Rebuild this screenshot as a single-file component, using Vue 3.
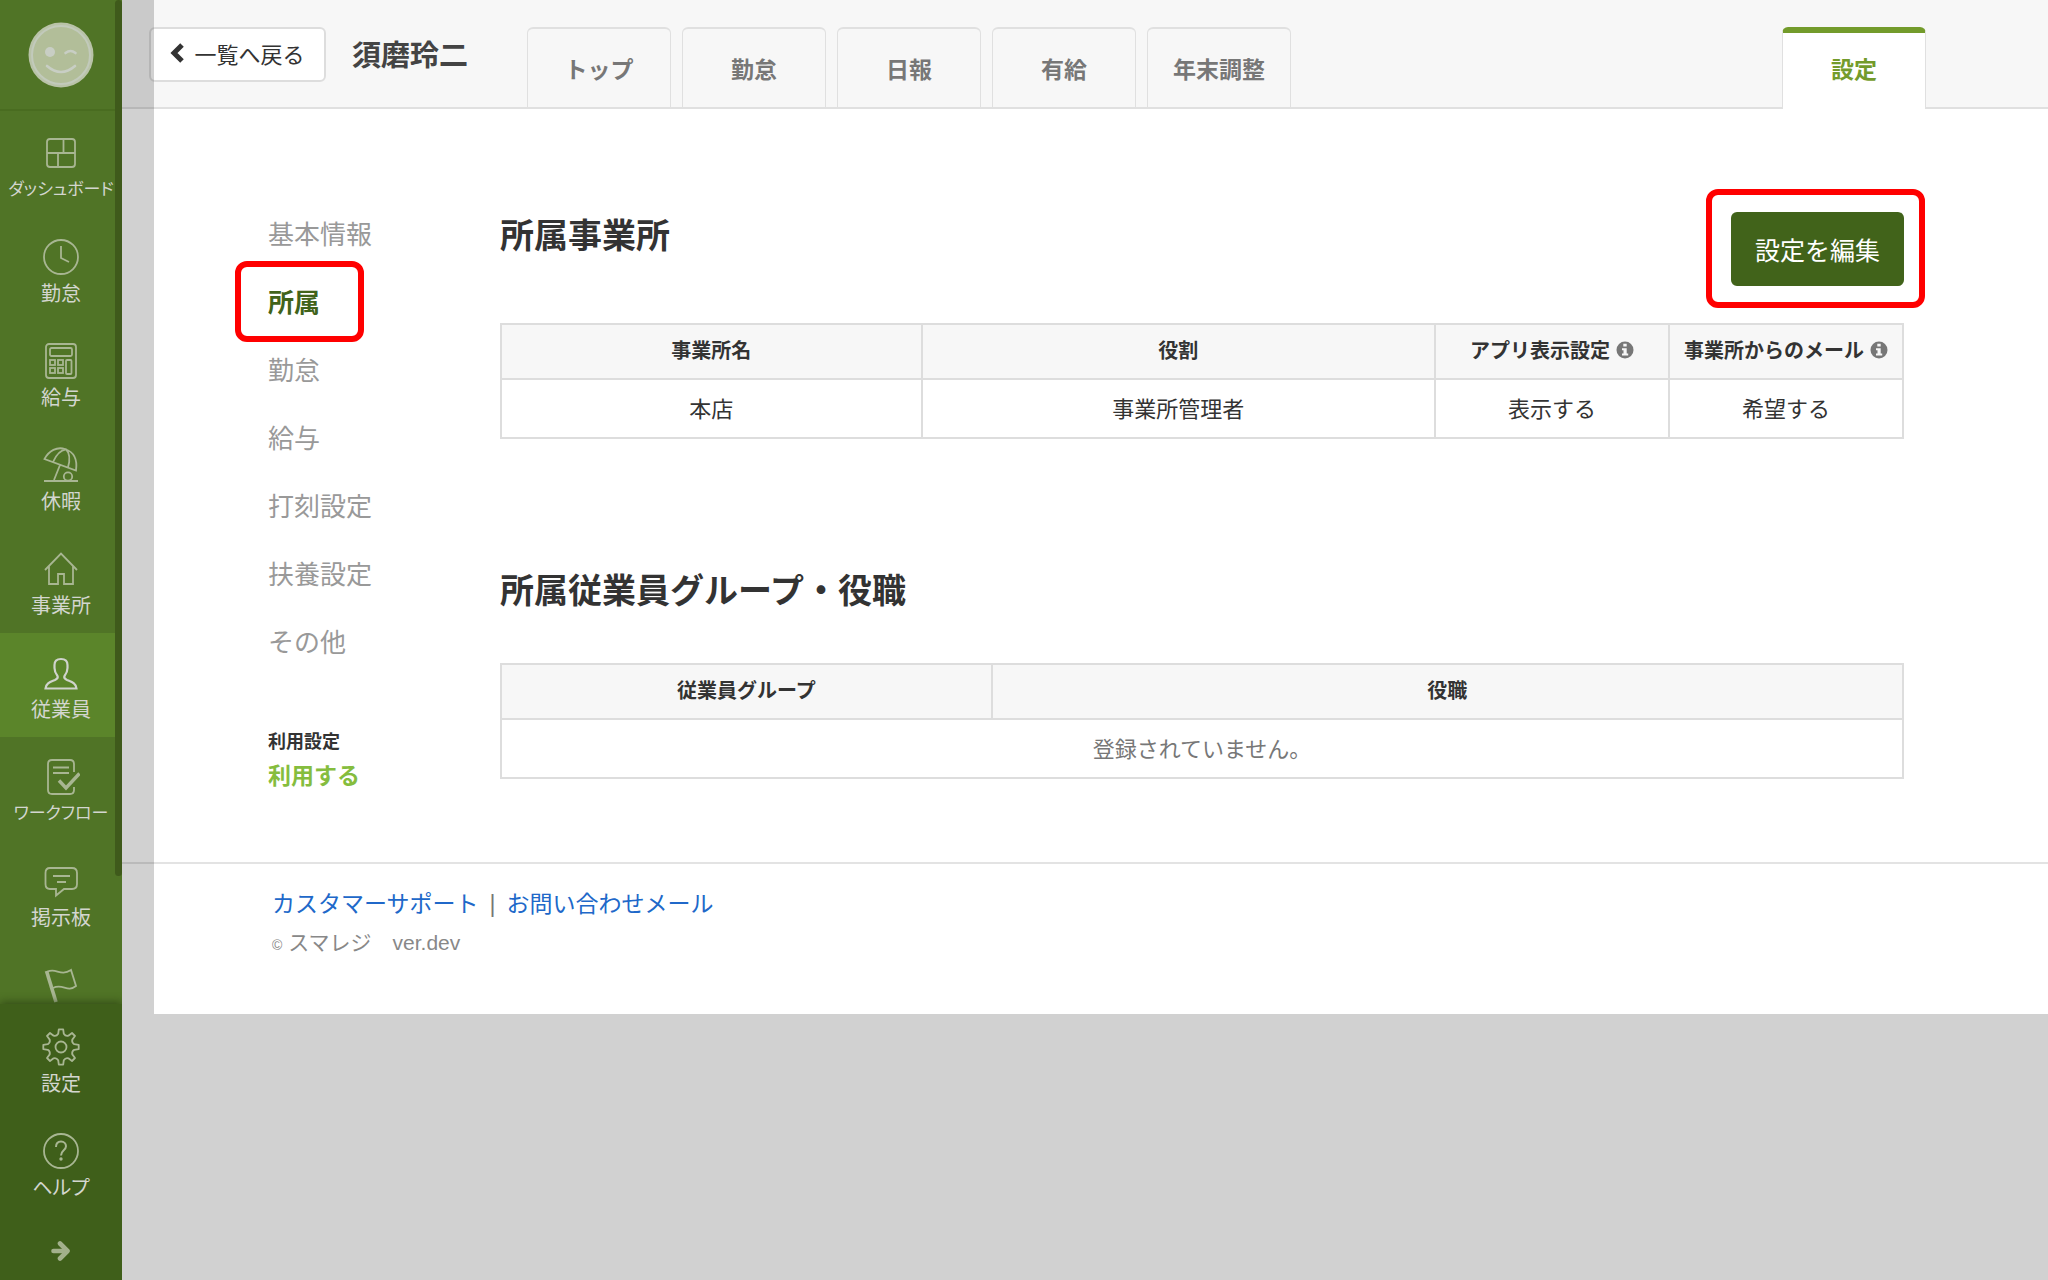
<script setup>
const navItems = [
  { label: 'ダッシュボード', icon: 'dashboard', long: true },
  { label: '勤怠', icon: 'clock' },
  { label: '給与', icon: 'calc' },
  { label: '休暇', icon: 'umbrella' },
  { label: '事業所', icon: 'home' },
  { label: '従業員', icon: 'person', active: true },
  { label: 'ワークフロー', icon: 'workflow', long: true },
  { label: '掲示板', icon: 'board' },
  { label: '', icon: 'flag' },
]
const footItems = [
  { label: '設定', icon: 'gear' },
  { label: 'ヘルプ', icon: 'help' },
]
const icons = {
  dashboard: '<rect x="5" y="5" width="28" height="28" rx="3"/><path d="M5 19h28M21.500 5v14M16 19v14"/>',
  clock: '<circle cx="19" cy="19" r="17"/><path d="M19 8v12l8 4"/>',
  calc: '<rect x="4" y="2" width="30" height="34" rx="3"/><rect x="8" y="6" width="22" height="8" rx="1.500"/><rect x="8" y="18" width="5" height="5"/><rect x="16" y="18" width="5" height="5"/><rect x="8" y="26" width="5" height="5"/><rect x="16" y="26" width="5" height="5"/><rect x="24" y="18" width="5.500" height="14" rx="1"/>',
  umbrella: '<path d="M2.500 13C7 4.500 15 .5 23 3c9 3 12.500 11 11 21.500ZM11 16C14 9 19 4 24 3.300c4 4 4 11 2 18M18 19l-6 15M2 35h34"/><circle cx="26" cy="30.500" r="4.200"/>',
  home: '<path d="M3 20 19 3.500 35 20M7 16.500V34h9V24h6v10h9V16.500"/>',
  person: '<path d="M19 5c-4.500 0-6.500 2.500-6.500 6v3c0 4 1 5.500 3 8 .8 1.600-.5 3-2.500 4-5 2-9 3-9.500 8.500h31C34 29 30 28 25 26c-2-1-3.300-2.400-2.500-4 2-2.500 3-4 3-8v-3c0-3.500-2-6-6.500-6Z"/>',
  workflow: '<path d="M32 14V6q0-4-4-4H10q-4 0-4 4v26q0 4 4 4h18q4 0 4-4v-3"/><path d="M11 9.500h16M11 15h16" stroke-width="2.200"/><path d="m17 22.500 7 7.500L37.500 15.500" stroke-width="3.400"/>',
  board: '<path d="M8 6h22q5 0 5 5v11q0 5-5 5H22l-8 6.500V27H8q-4.500 0-4.500-5V11q0-5 4.500-5Z"/><path d="M11 14h17M15 20h9" stroke-width="2"/>',
  flag: '<path d="M4.500 5 14 36" stroke-width="3.600"/><path d="M5 6c9-5 13 5 24-2l5 16c-9 7-13-3-23 2"/>',
  gear: '<circle cx="19" cy="19" r="5.500"/><path stroke-linejoin="round" d="M16.800 1.300h4.400l.6 4.500Q23.500 8.500 26.400 7.700L30 5l3 3-2.700 3.600Q29.500 14.500 32.200 16.200l4.500.6v4.400l-4.500.6Q29.500 23.500 30.300 26.400L33 30l-3 3-3.600-2.700Q23.500 29.500 21.800 32.200l-.6 4.500h-4.400l-.6-4.500Q14.500 29.500 11.600 30.300L8 33l-3-3 2.700-3.600Q8.500 23.500 5.800 21.800l-4.500-.6v-4.400l4.500-.6Q8.500 14.500 7.700 11.600L5 8l3-3 3.600 2.700Q14.500 8.500 16.200 5.800Z"/>',
  help: '<circle cx="19" cy="19" r="17"/><path d="M14 15c0-3.500 2-5.500 5-5.500s5 2 5 4.800c0 4-5 4.200-5 9.200" stroke-width="2"/><circle cx="19" cy="27" r=".8"/>',
}
const tabs = ['トップ', '勤怠', '日報', '有給', '年末調整']
const menu = ['基本情報', '所属', '勤怠', '給与', '打刻設定', '扶養設定', 'その他']
</script>

<template>
  <div class="app">
    <aside class="sidebar">
      <a class="avatar" href="#" aria-label="プロフィール">
        <svg viewBox="0 0 66 66" width="66" height="66">
          <circle cx="33" cy="33" r="32.500" fill="#b9c3a8" />
          <circle cx="33" cy="33" r="29" fill="#b2be99" stroke="#c2cabb" stroke-width="2" />
          <circle cx="22" cy="30" r="5" fill="#c8cec4" />
          <g fill="none" stroke="#c8cec4" stroke-width="2.600" stroke-linecap="round">
            <path d="M37.500 31q5-4 10 0M19 44q14 12 28 0" />
          </g>
        </svg>
      </a>
      <nav class="nav">
        <a v-for="n in navItems" :key="n.icon" href="#" class="nav-item" :class="{ active: n.active, long: n.long }">
          <svg class="ico" viewBox="0 0 38 38" v-html="icons[n.icon]" />
          <span v-if="n.label">{{ n.label }}</span>
        </a>
      </nav>
      <span class="scrollbar" />
      <div class="nav-foot">
        <a v-for="n in footItems" :key="n.icon" href="#" class="nav-item">
          <svg class="ico" viewBox="0 0 38 38" v-html="icons[n.icon]" />
          <span>{{ n.label }}</span>
        </a>
        <button class="expand" aria-label="メニューを開く">
          <svg viewBox="0 0 20 20" width="20" height="20" fill="none" stroke="#a3b18c" stroke-width="4.600" stroke-linecap="round" stroke-linejoin="round">
            <path d="M2.500 10h13" /><path d="m9 2.500 7.500 7.500L9 17.500" />
          </svg>
        </button>
      </div>
    </aside>

    <div class="page">
      <header class="header">
        <button class="back">
          <svg viewBox="0 0 14 20" width="14" height="20" fill="none" stroke="#333" stroke-width="5"><path d="M12 2 4 10l8 8" /></svg>
          一覧へ戻る
        </button>
        <h1>須磨玲二</h1>
        <nav class="tabs">
          <a v-for="t in tabs" :key="t" href="#" class="tab">{{ t }}</a>
          <a href="#" class="tab current">設定</a>
        </nav>
      </header>

      <div class="body">
        <div class="side">
          <ul class="menu">
            <li v-for="m in menu" :key="m">
              <a href="#" :class="{ current: m === '所属' }">{{ m }}</a>
              <span v-if="m === '所属'" class="frame menu-frame" />
            </li>
          </ul>
          <div class="usage">
            <div class="usage-label">利用設定</div>
            <div class="usage-value">利用する</div>
          </div>
        </div>

        <main class="content">
          <div class="section-head">
            <h2>所属事業所</h2>
            <div class="edit-wrap">
              <button class="edit">設定を編集</button>
              <span class="frame edit-frame" />
            </div>
          </div>
          <table class="offices">
            <colgroup><col class="c-name" /><col /><col class="c-opt" /><col class="c-opt" /></colgroup>
            <thead>
              <tr>
                <th>事業所名</th>
                <th>役割</th>
                <th v-for="h in ['アプリ表示設定', '事業所からのメール']" :key="h">
                  <span class="with-info">{{ h }}
                    <svg viewBox="0 0 18 18" width="18" height="18"><circle cx="9" cy="9" r="8.500" fill="#777" /><path d="M7.300 2.800h3.400v2.600H7.300zM6 7.200h4.700v5.200h1.500v2H6v-2h1.500V9.200H6z" fill="#f7f7f7" /></svg>
                  </span>
                </th>
              </tr>
            </thead>
            <tbody>
              <tr><td>本店</td><td>事業所管理者</td><td>表示する</td><td>希望する</td></tr>
            </tbody>
          </table>

          <h2 class="second">所属従業員グループ・役職</h2>
          <table>
            <colgroup><col class="c-group" /><col /></colgroup>
            <thead><tr><th>従業員グループ</th><th>役職</th></tr></thead>
            <tbody><tr><td colspan="2" class="empty">登録されていません。</td></tr></tbody>
          </table>
        </main>
      </div>

      <footer class="footer">
        <div class="links"><a href="#">カスタマーサポート</a><span class="sep">|</span><a href="#">お問い合わせメール</a></div>
        <div class="copy"><small>©</small> スマレジ　ver.dev</div>
      </footer>
      <span class="shade" />
    </div>
  </div>
</template>

<style>
body { background: #d1d1d1; }
</style>

<style scoped>
* { box-sizing: border-box; }
.app {
  display: flex;
  align-items: flex-start;
  font-family: "Liberation Sans", "Noto Sans CJK JP", sans-serif;
  color: #333;
}
a { text-decoration: none; color: inherit; }
button { font: inherit; cursor: pointer; }
h1, h2 { margin: 0; }

.sidebar {
  position: sticky;
  top: 0;
  flex: none;
  display: flex;
  flex-direction: column;
  width: 122px;
  height: 100vh;
  background: #507426;
}
.avatar {
  flex: none;
  display: flex;
  justify-content: center;
  height: 111px;
  padding-top: 22px;
  border-bottom: 2px solid #496c20;
}
.nav { flex: 1; min-height: 0; padding-top: 2px; overflow: hidden; }
.nav-item {
  display: flex;
  flex-direction: column;
  align-items: center;
  height: 104px;
  padding-top: 21px;
  font-size: 20px;
  line-height: 28px;
  color: #d3d6cf;
  white-space: nowrap;
  font-feature-settings: "palt";
}
.nav-item.active { background: #5b852a; }
.nav-item.long { font-size: 17px; }
.ico {
  width: 38px;
  height: 38px;
  margin-bottom: 4px;
  fill: none;
  stroke: #a8b692;
  stroke-width: 1.8;
}
.active .ico { stroke: #d0d3cc; stroke-width: 2.2; }
.scrollbar {
  position: absolute;
  top: 0;
  right: 0;
  width: 7px;
  height: 876px;
  border-radius: 4px;
  background: #3f5a1b;
}
.nav-foot {
  position: relative;
  flex: none;
  height: 276px;
  padding-top: 3px;
  background: #3f5f1a;
  box-shadow: 0 -2px 8px rgba(40, 60, 16, 0.7);
  clip-path: inset(-12px 0 0 0);
}
.expand {
  display: flex;
  justify-content: center;
  align-items: center;
  width: 100%;
  height: 72px;
  padding: 0;
  border: 0;
  background: none;
}

.page { position: relative; flex: 1; min-width: 0; background: #fff; }
.shade {
  position: absolute;
  top: 0;
  bottom: 0;
  left: 0;
  width: 32px;
  background: rgba(0, 0, 0, 0.18);
  pointer-events: none;
}
.header {
  display: flex;
  align-items: flex-start;
  height: 109px;
  padding: 27px 122px 0 27px;
  background: #f7f7f7;
  border-bottom: 2px solid #e0e0e0;
}
.back {
  display: flex;
  align-items: center;
  justify-content: center;
  gap: 10px;
  width: 177px;
  height: 55px;
  padding: 0 0 4px;
  border: 2px solid #ddd;
  border-radius: 6px;
  background: #fff;
  color: #333;
  font-size: 22px;
}
h1 { width: 201px; padding-left: 26px; font-size: 29px; line-height: 58px; color: #444; white-space: nowrap; }
.tabs { flex: 1; display: flex; gap: 11px; height: 82px; }
.tab {
  width: 144px;
  height: 80px;
  border: 2px solid #e0e0e0;
  border-width: 2px 1px 0;
  border-radius: 6px 6px 0 0;
  font-size: 23px;
  font-weight: 700;
  line-height: 82px;
  text-align: center;
  color: #777;
}
.tab.current {
  height: 82px;
  margin-left: auto;
  border-top: 6px solid #739b2b;
  background: #fff;
  line-height: 74px;
  color: #739b2b;
}

.body { display: flex; padding: 92px 144px 66px 146px; }
.side { flex: none; width: 232px; }
.menu { margin: 0; padding: 0; list-style: none; }
.menu li { position: relative; font-size: 26px; line-height: 68px; color: #999; }
.menu a.current { font-weight: 700; color: #41631a; }
.frame { position: absolute; border: 6px solid #f00; border-radius: 12px; pointer-events: none; }
.menu-frame { top: -8px; left: -33px; width: 129px; height: 81px; }
.usage { margin-top: 51px; font-weight: 700; }
.usage-label { font-size: 18px; line-height: 28px; }
.usage-value { font-size: 23px; line-height: 40px; color: #85bd3e; }

.content { flex: 1; min-width: 0; padding-top: 11px; }
.section-head { display: flex; justify-content: space-between; align-items: flex-start; margin-bottom: 37px; }
h2 { font-size: 34px; line-height: 48px; }
h2.second { margin: 128px 0 48px; }
.edit-wrap { position: relative; }
.edit {
  display: block;
  width: 173px;
  height: 74px;
  padding: 0;
  border: 0;
  border-radius: 6px;
  background: #41631a;
  color: #fff;
  font-size: 25px;
}
.edit-frame { inset: -23px -21px -22px -25px; }

table { width: 100%; table-layout: fixed; border-collapse: collapse; }
.c-name { width: 30%; }
.c-opt { width: 234px; }
.c-group { width: 35%; }
th, td { border: 2px solid #ddd; padding: 0 0 4px; text-align: center; white-space: nowrap; }
th { height: 55px; background: #f7f7f7; font-size: 20px; }
td { height: 59px; font-size: 22px; }
.with-info { display: inline-flex; align-items: center; gap: 6px; }
.empty { color: #777; }

.footer { padding: 22px 150px 48px; border-top: 2px solid #e3e3e3; }
.links { font-size: 23px; line-height: 36px; color: #777; }
.links a { color: #2068c9; }
.sep { margin: 0 11px; }
.copy { font-size: 21px; line-height: 42px; color: #888; }
.copy small { font-size: 14px; }
</style>
